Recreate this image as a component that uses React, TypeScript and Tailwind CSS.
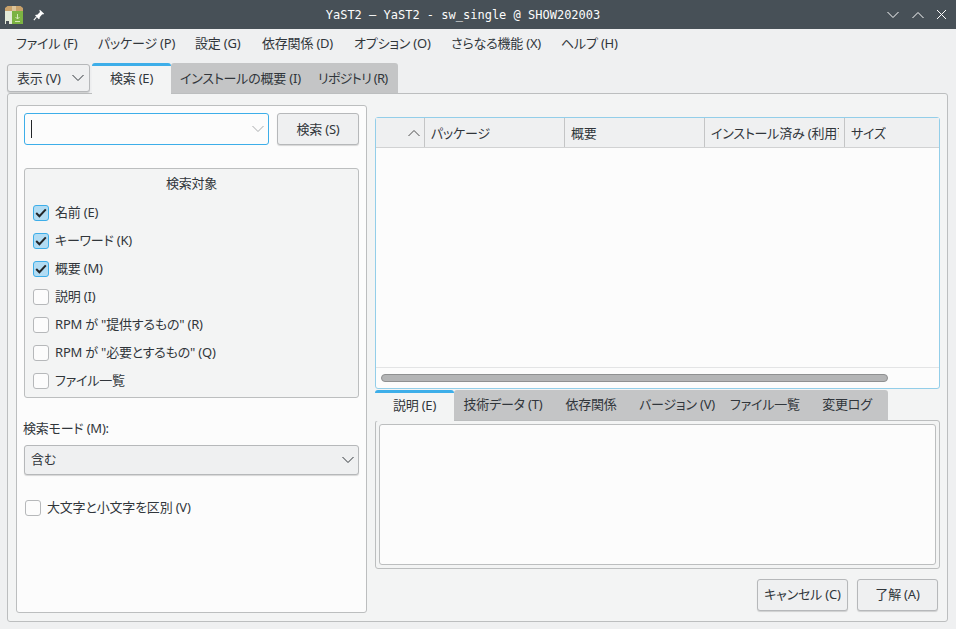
import React from 'react';

const font: React.CSSProperties = { fontFamily: '"Noto Sans", "Noto Sans CJK JP", sans-serif', fontFeatureSettings: '"palt"' };

const Chevron: React.FC<{ className?: string; up?: boolean }> = ({ className, up }) => (
  <svg width="14" height="8" viewBox="0 0 14 8" fill="none" className={className}>
    <path d={up ? 'M1.5 7L7 1.5L12.5 7' : 'M1.5 1L7 6.5L12.5 1'} stroke="currentColor" strokeWidth="1" />
  </svg>
);

const AppIcon = () => (
  <svg width="18" height="18" viewBox="0 0 18 18" className="shrink-0">
    <path d="M0 2L2.5 0H15.5L18 2V5H0Z" fill="#c9a26b" />
    <rect x="7" y="0" width="4" height="5" fill="#dcc49a" />
    <rect x="0" y="5" width="7" height="13" fill="#e4ead9" />
    <rect x="7" y="5" width="11" height="13" fill="#7cb342" />
    <rect x="1" y="15" width="3" height="3" fill="#4a5057" />
    <path d="M12.5 8V13M10.5 11L12.5 13L14.5 11M10 15.5H15" stroke="#d5e8b8" strokeWidth="1" fill="none" />
  </svg>
);

const PinIcon = () => (
  <svg width="12" height="12" viewBox="0 0 14 14" className="shrink-0">
    <path d="M8 1L13 5.5L11.8 6.5L10.8 6.2L7.8 9.6L7.8 11.2L6.8 12L2.5 7.6L3.3 6.6L5 6.6L8.2 3.6L7.4 2Z" fill="#ffffff" />
    <path d="M4 9.5L1 13" stroke="#ffffff" strokeWidth="1.2" />
  </svg>
);

const Box: React.FC<{ checked?: boolean }> = ({ checked }) => (
  <div className={`w-[16px] h-[16px] rounded-[3px] border shrink-0 flex items-center justify-center ${checked ? 'bg-[#b2dcf3] border-[#3daee9]' : 'bg-[#fcfcfc] border-[#b6b8ba]'}`}>
    {checked && (
      <svg width="12" height="10" viewBox="0 0 12 10" fill="none">
        <path d="M1.2 5L4.4 8.2L10.8 1.4" stroke="#232629" strokeWidth="2" />
      </svg>
    )}
  </div>
);

const Check: React.FC<{ label: string; checked?: boolean }> = ({ label, checked }) => (
  <div className="flex items-center h-[28px] gap-[6px]">
    <Box checked={checked} />
    <span className="pb-[2px]">{label}</span>
  </div>
);

const Btn: React.FC<{ label: string; className?: string }> = ({ label, className }) => (
  <div className={`h-[32px] rounded-[3px] border border-[#b6b8ba] bg-[#eff0f1] shadow-[0_1px_1px_rgba(0,0,0,0.15)] flex items-center justify-center ${className}`}>
    {label}
  </div>
);

const App: React.FC = () => {
  const menus = [
    { label: 'ファイル (F)', w: 'w-[82px]' },
    { label: 'パッケージ (P)', w: 'w-[97px]' },
    { label: '設定 (G)', w: 'w-[67px]' },
    { label: '依存関係 (D)', w: 'w-[92px]' },
    { label: 'オプション (O)', w: 'w-[97px]' },
    { label: 'さらなる機能 (X)', w: 'w-[110px]' },
    { label: 'ヘルプ (H)', w: 'w-[80px]' },
  ];
  const columns = [
    { label: 'パッケージ', w: 'w-[140px] border-r' },
    { label: '概要', w: 'w-[140px] border-r' },
    { label: 'インストール済み (利用可能)', w: 'w-[140px] border-r' },
    { label: 'サイズ', w: 'w-[94px]' },
  ];
  const detailTabs = [
    { label: '技術データ (T)', w: 'w-[98px]' },
    { label: '依存関係', w: 'w-[78px]' },
    { label: 'バージョン (V)', w: 'w-[94px]' },
    { label: 'ファイル一覧', w: 'w-[82px]' },
    { label: '変更ログ', w: 'w-[82px]' },
  ];

  return (
    <div className="w-[956px] h-[629px] overflow-hidden bg-[#eff0f1] flex flex-col text-[13px] leading-none tracking-[-0.2px] text-[#31363b]" style={font}>
      {/* title bar */}
      <div className="h-[29px] bg-[#475057] flex items-center pl-[5px] pr-[9px] shrink-0 text-[#fcfcfc]">
        <AppIcon />
        <div className="ml-[10px]"><PinIcon /></div>
        <div className="flex-1 text-center text-[12px] tracking-normal font-['DejaVu_Sans_Mono'] pr-[5px]">YaST2 — YaST2 - sw_single @ SHOW202003</div>
        <div className="flex items-center gap-[11px]">
          <Chevron />
          <Chevron up />
          <svg width="11" height="11" viewBox="0 0 11 11" fill="none"><path d="M1 1L10 10M10 1L1 10" stroke="currentColor" strokeWidth="1" /></svg>
        </div>
      </div>

      {/* menu */}
      <div className="h-[30px] flex items-center pl-[16px] pb-[2px] shrink-0">
        {menus.map((m) => <div key={m.label} className={`${m.w} whitespace-nowrap`}>{m.label}</div>)}
      </div>

      {/* outer tabs */}
      <div className="h-[34px] flex items-end pl-[7px] shrink-0 relative z-10">
        <div className="w-[83px] h-[28px] mb-[1px] rounded-[3px] border border-[#b6b8ba] bg-[#eff0f1] shadow-[0_1px_1px_rgba(0,0,0,0.15)] flex items-center pl-[9px] pr-[3px] justify-between">
          <span>表示 (V)</span>
          <Chevron className="mr-[1px]" />
        </div>
        <div className="ml-[2px] w-[79px] h-[31px] -mb-[1px] pb-[3px] bg-[#f3f4f4] border-t-[3px] border-[#3daee9] rounded-t-[3px] flex items-center justify-center">検索 (E)</div>
        <div className="w-[227px] h-[30px] bg-[#c4c5c6] rounded-t-[3px] flex items-center pl-[9px] whitespace-nowrap">
          <span className="w-[138px]">インストールの概要 (I)</span>
          <span className="tracking-[-0.7px]">リポジトリ (R)</span>
        </div>
      </div>

      {/* main panel */}
      <div className="w-[941px] h-[529px] ml-[7px] rounded-[3px] border border-[#bcbebf] bg-[#f3f4f4] flex pl-[8px] pt-[11px] pb-[7px] gap-[8px]">
        {/* search pane */}
        <div className="w-[351px] h-[508px] bg-[#fcfcfc] rounded-[3px] border border-[#bcbebf] px-[7px] pt-[7px] flex flex-col shrink-0">
          <div className="flex gap-[8px] h-[32px]">
            <div className="w-[245px] h-[32px] rounded-[3px] border border-[#3daee9] bg-[#fcfcfc] flex items-center pl-[6px] pr-[2px] justify-between">
              <div className="w-[1px] h-[18px] bg-[#232629]" />
              <Chevron className="text-[#a9abad] mr-[1px]" />
            </div>
            <Btn label="検索 (S)" className="w-[82px]" />
          </div>

          <div className="mt-[23px] h-[230px] rounded-[3px] border border-[#bcbebf] bg-[#f3f4f4] pl-[8px] pt-[6px]">
            <div className="pr-[8px] h-[16px] flex items-center justify-center">検索対象</div>
            <div className="mt-[8px]">
              <Check label="名前 (E)" checked />
              <Check label="キーワード (K)" checked />
              <Check label="概要 (M)" checked />
              <Check label="説明 (I)" />
              <Check label={'RPM が "提供するもの" (R)'} />
              <Check label={'RPM が "必要とするもの" (Q)'} />
              <Check label="ファイル一覧" />
            </div>
          </div>

          <div className="mt-[23px] -ml-[1px] h-[14px] flex items-center">検索モード (M):</div>
          <div className="mt-[10px] h-[30px] pb-[2px] rounded-[3px] border border-[#b6b8ba] bg-[#eff0f1] shadow-[0_1px_1px_rgba(0,0,0,0.15)] flex items-center pl-[6px] pr-[3px] justify-between shrink-0">
            <span>含む</span>
            <Chevron className="mt-[2px]" />
          </div>
          <div className="mt-[25px] ml-[1px] flex items-center gap-[6px]">
            <Box />
            <span className="pb-[2px]">大文字と小文字を区別 (V)</span>
          </div>
        </div>

        {/* package pane */}
        <div className="w-[565px] flex flex-col pt-[12px] shrink-0">
          <div className="h-[272px] rounded-[3px] border border-[#93cee9] bg-[#fcfcfc] flex flex-col">
            <div className="h-[30px] bg-[#eff0f1] border-b border-[#d1d2d3] flex shrink-0">
              <div className="w-[49px] shrink-0 border-r border-[#c4c5c6] flex items-center justify-end pr-[3px]">
                <Chevron up className="text-[#4d4d4d]" />
              </div>
              {columns.map((c) => (
                <div key={c.label} className={`${c.w} shrink-0 border-[#c4c5c6] flex items-center pl-[6px] pr-[5px] pt-[1px]`}>
                  <span className="overflow-hidden whitespace-nowrap leading-[20px]">{c.label}</span>
                </div>
              ))}
            </div>
            <div className="flex-1 border-b border-[#e3e4e5]" />
            <div className="h-[20px] pl-[5px] pt-[6px] shrink-0">
              <div className="w-[507px] h-[8px] rounded-full bg-[#b4b5b6] border border-[#8f9091]" />
            </div>
          </div>

          <div className="h-[31px] flex items-end shrink-0 relative z-10">
            <div className="w-[79px] h-[31px] -mb-[1px] pb-[3px] bg-[#f3f4f4] border-t-[3px] border-[#3daee9] rounded-t-[3px] flex items-center justify-center">説明 (E)</div>
            <div className="w-[434px] h-[30px] pb-[2px] bg-[#c4c5c6] rounded-t-[3px] flex items-center">
              {detailTabs.map((t) => (
                <div key={t.label} className={`${t.w} text-center whitespace-nowrap`}>{t.label}</div>
              ))}
            </div>
          </div>
          <div className="h-[149px] rounded-[3px] border border-[#bcbebf] bg-[#f3f4f4] p-[3px] shrink-0">
            <div className="h-full rounded-[3px] border border-[#bcbebf] bg-[#fcfcfc]" />
          </div>

          <div className="flex justify-end gap-[9px] pt-[10px] pr-[2px]">
            <Btn label="キャンセル (C)" className="w-[91px] pb-[2px]" />
            <Btn label="了解 (A)" className="w-[81px] pb-[2px]" />
          </div>
        </div>
      </div>
    </div>
  );
};

export default App;
